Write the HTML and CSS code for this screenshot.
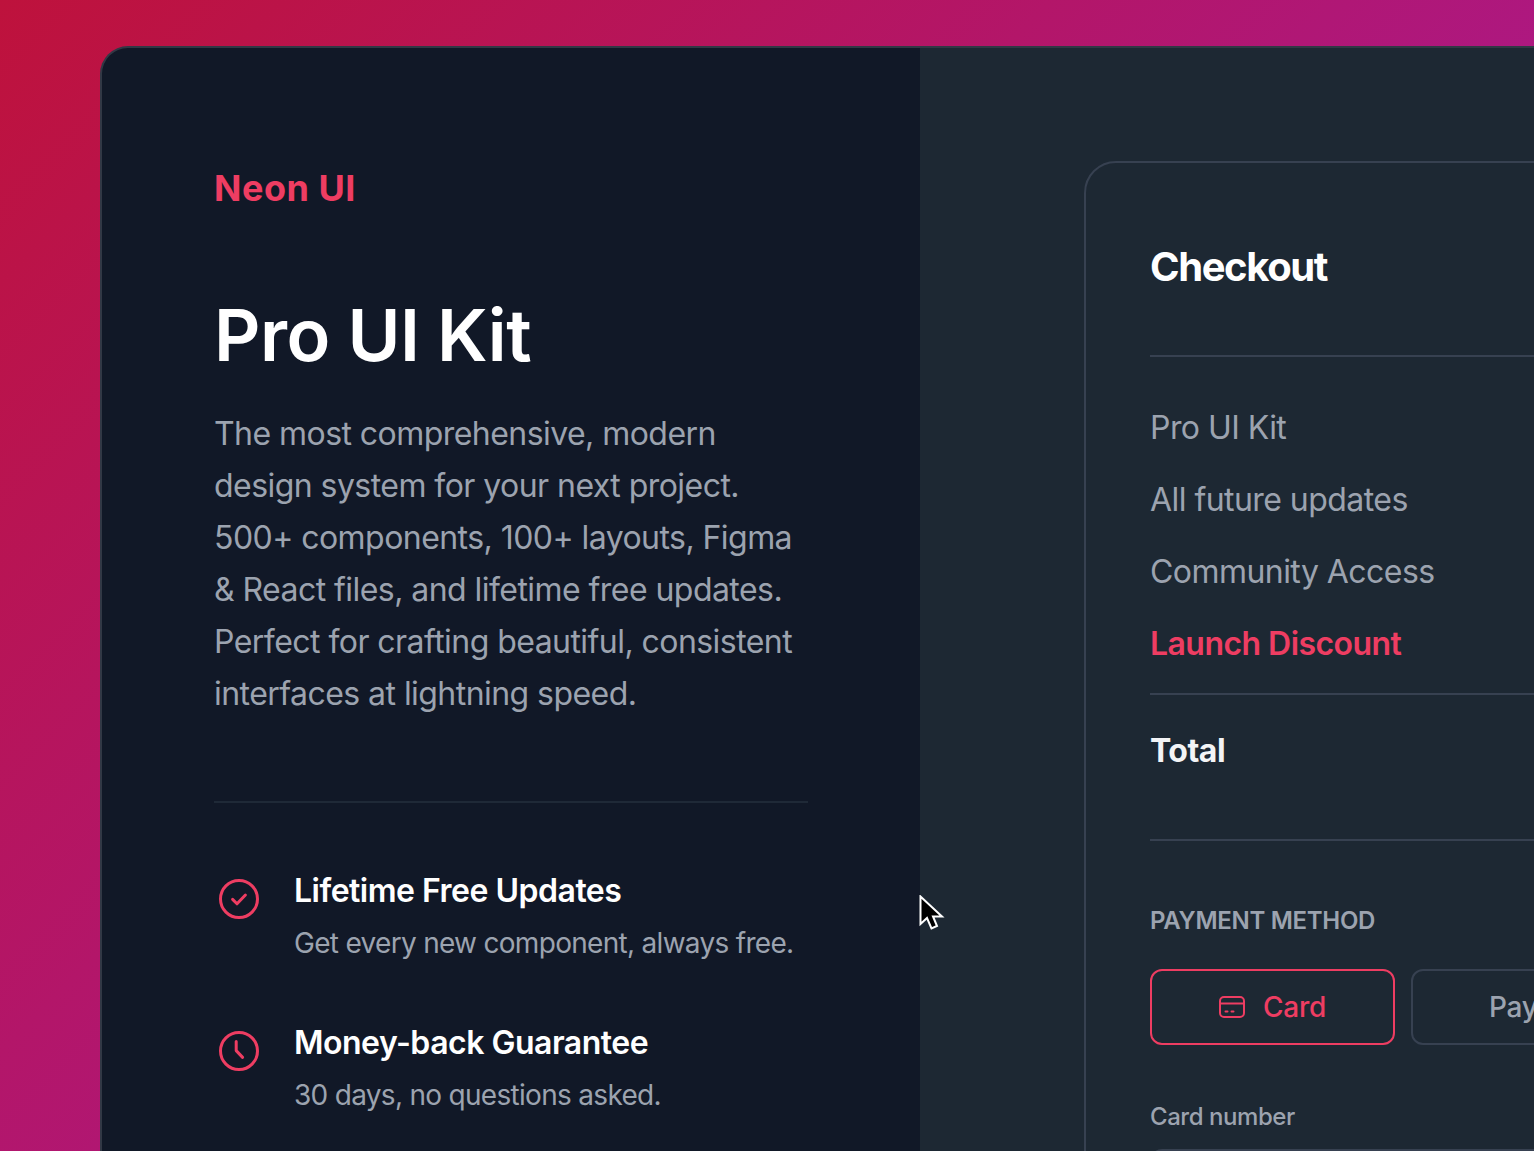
FILE: index.html
```html
<!DOCTYPE html>
<html lang="en">
<head>
  <meta charset="UTF-8" />
  <meta name="viewport" content="width=device-width, initial-scale=1.0"/>
  <title>Neon UI Checkout</title>
  <link rel="stylesheet" href="styles.css">
</head>
<body>

  <div class="shell">
    <section class="promo">
      <div class="brand">Neon UI</div>
      <h1 class="promo-title">Pro UI Kit</h1>
      <p class="promo-text">The most comprehensive, modern design system for your next project. 500+ components, 100+ layouts, Figma &amp; React files, and lifetime free updates. Perfect for crafting beautiful, consistent interfaces at lightning speed.</p>

      <ul class="perks">
        <li class="perk">
          <svg class="perk-icon" viewBox="0 0 24 24" fill="none" stroke="currentColor" stroke-width="1.5" stroke-linecap="round" stroke-linejoin="round">
            <circle cx="12" cy="12" r="9.25"/>
            <path d="M8.8 12.2l2.2 2.2 4.2-4.4"/>
          </svg>
          <div>
            <div class="perk-title">Lifetime Free Updates</div>
            <div class="perk-text">Get every new component, always free.</div>
          </div>
        </li>
        <li class="perk">
          <svg class="perk-icon" viewBox="0 0 24 24" fill="none" stroke="currentColor" stroke-width="1.5" stroke-linecap="round" stroke-linejoin="round">
            <circle cx="12" cy="12" r="9.25"/>
            <path d="M10.6 7.2v4.6l3.2 3.4"/>
          </svg>
          <div>
            <div class="perk-title">Money-back Guarantee</div>
            <div class="perk-text">30 days, no questions asked.</div>
          </div>
        </li>
      </ul>
    </section>

    <section class="checkout-side">
      <div class="checkout-card">
        <h2 class="checkout-title">Checkout</h2>

        <div class="order-lines">
          <div class="order-line">Pro UI Kit</div>
          <div class="order-line">All future updates</div>
          <div class="order-line">Community Access</div>
          <div class="order-line order-discount">Launch Discount</div>
        </div>

        <div class="order-total">Total</div>

        <div class="section-label">PAYMENT METHOD</div>
        <div class="pay-options">
          <button class="pay-btn pay-active">
            <svg class="pay-icon" viewBox="0 0 26 22" fill="none" stroke="currentColor" stroke-width="2" stroke-linecap="round" stroke-linejoin="round">
              <rect x="1" y="1" width="24" height="20" rx="4"/>
              <path d="M1 7.5h24M6.5 15.5h2M12.5 15.5h2"/>
            </svg>
            Card
          </button>
          <button class="pay-btn">PayPal</button>
        </div>

        <label class="field-label">Card number</label>
        <div class="field-input"></div>
      </div>
    </section>
  </div>

  <svg class="cursor" viewBox="0 0 26 36" width="26" height="36">
    <path d="M1.5 1.5V29L8 23l4.5 10.5 5.5-2.5-4-9.5h9z" fill="#000" stroke="#fff" stroke-width="2"/>
  </svg>

</body>
</html>
```

FILE: styles.css
```css
* {
  margin: 0;
  padding: 0;
  box-sizing: border-box;
}

body {
  height: 100vh;
  overflow: hidden;
  padding: 46px 0 0 100px;
  background: linear-gradient(135deg, #be123c, #a21caf);
  font-family: Inter, sans-serif;
  color: #fff;
}

.shell {
  display: flex;
  width: 1800px;
  min-height: 1300px;
  border-radius: 28px;
  border: 2px solid rgba(255, 255, 255, 0.14);
  overflow: hidden;
  background-color: #111827;
}

.promo {
  flex: 0 0 818px;
  padding: 118px 112px 0 112px;
}

.brand {
  font-size: 36px;
  font-weight: 700;
  line-height: 44px;
  letter-spacing: 0.5px;
  color: #ee3d62;
}

.promo-title {
  margin-top: 85px;
  font-size: 72px;
  font-weight: 600;
  line-height: 80px;
  letter-spacing: -0.5px;
}

.promo-text {
  margin-top: 33px;
  font-size: 32px;
  line-height: 52px;
  letter-spacing: -0.55px;
  color: #9ca3af;
}

.perks {
  list-style: none;
  margin-top: 81px;
  padding-top: 68px;
  border-top: 2px solid #1f2937;
}

.perk {
  display: flex;
  gap: 31px;
  margin-bottom: 60px;
}

.perk-icon {
  flex: none;
  width: 48px;
  height: 48px;
  margin: 4px 0 0 1px;
  color: #ee3d62;
}

.perk-title {
  font-size: 32px;
  font-weight: 600;
  line-height: 40px;
  letter-spacing: -0.5px;
}

.perk-text {
  margin-top: 12px;
  font-size: 28px;
  line-height: 40px;
  letter-spacing: -0.7px;
  color: #9ca3af;
}

.checkout-side {
  flex: 1;
  padding: 113px 0 0 164px;
  background-color: #1d2833;
}

.checkout-card {
  width: 900px;
  height: 1200px;
  padding: 78px 64px 0 64px;
  border: 2px solid #374151;
  border-radius: 32px;
}

.checkout-title {
  font-size: 40px;
  font-weight: 700;
  line-height: 52px;
  letter-spacing: -1.4px;
  padding-bottom: 62px;
  border-bottom: 2px solid #374151;
}

.order-lines {
  padding: 51px 0 29px;
  border-bottom: 2px solid #374151;
}

.order-line {
  font-size: 32px;
  line-height: 40px;
  letter-spacing: -0.55px;
  margin-bottom: 32px;
  color: #9ca3af;
}

.order-discount {
  font-weight: 600;
  margin-bottom: 0;
  color: #ee3d62;
}

.order-total {
  padding: 36px 0 68px;
  font-size: 32px;
  font-weight: 700;
  line-height: 40px;
  letter-spacing: -0.5px;
  color: #f3f4f6;
  border-bottom: 2px solid #374151;
}

.section-label {
  margin-top: 64px;
  font-size: 24px;
  font-weight: 600;
  line-height: 32px;
  letter-spacing: -0.3px;
  color: #9ca3af;
}

.pay-options {
  display: grid;
  grid-template-columns: 245px 245px;
  gap: 16px;
  margin-top: 32px;
}

.pay-btn {
  display: flex;
  align-items: center;
  justify-content: center;
  gap: 18px;
  height: 76px;
  font-family: inherit;
  font-size: 28px;
  font-weight: 500;
  letter-spacing: -0.2px;
  color: #9ca3af;
  background: none;
  border: 2px solid #374151;
  border-radius: 12px;
}

.pay-active {
  color: #ee3d62;
  border-color: #ee3d62;
}

.pay-icon {
  width: 26px;
  height: 22px;
}

.field-label {
  display: block;
  margin-top: 56px;
  font-size: 24px;
  font-weight: 500;
  line-height: 32px;
  letter-spacing: -0.45px;
  color: #9ca3af;
}

.field-input {
  margin-top: 16px;
  height: 80px;
  border: 2px solid #374151;
  border-radius: 12px;
}

.cursor {
  position: absolute;
  left: 919px;
  top: 895px;
}
```
